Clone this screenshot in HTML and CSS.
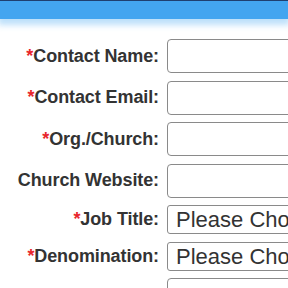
FILE: index.html
```html
<!DOCTYPE html>
<html>
<head>
<meta charset="utf-8">
<link rel="stylesheet" href="styles.css">
</head>
<body>
<div class="topbar"></div>
<form class="form">
  <label class="lbl"><span class="req">*</span>Contact Name:</label>
  <input class="txt" type="text">
  <label class="lbl"><span class="req">*</span>Contact Email:</label>
  <input class="txt" type="text">
  <label class="lbl"><span class="req">*</span>Org./Church:</label>
  <input class="txt" type="text">
  <label class="lbl">Church Website:</label>
  <input class="txt" type="text">
  <label class="lbl"><span class="req">*</span>Job Title:</label>
  <div class="sel">Please Choose</div>
  <label class="lbl"><span class="req">*</span>Denomination:</label>
  <div class="sel">Please Choose</div>
  <label class="lbl"><span class="req">*</span>City:</label>
  <input class="txt" type="text">
</form>
</body>
</html>
```
FILE: styles.css
```css
html, body {
  margin: 0;
  padding: 0;
  background: #fff;
  overflow: hidden;
}
.topbar {
  height: 18px;
  border-top: 1px solid #1f3f70;
  background: #43a5f0;
  box-shadow: 0 4px 6px 2px rgba(67,165,240,0.35);
}
.form {
  margin-top: 20px;
  display: grid;
  grid-template-columns: 159px 200px;
  column-gap: 8px;
  row-gap: 7.5px;
  align-items: center;
  font-family: "Liberation Sans", Arial, sans-serif;
}
.lbl {
  text-align: right;
  font-weight: bold;
  font-size: 18px;
  letter-spacing: -0.1px;
  color: #333;
}
.req {
  color: #e8262b;
  font-weight: bold;
}
.txt {
  box-sizing: border-box;
  height: 34px;
  width: 200px;
  margin: 0;
  border: 1px solid #8a8a8a;
  border-radius: 4px;
  background: #fff;
}
.sel {
  box-sizing: border-box;
  height: 29px;
  width: 200px;
  border: 1px solid #8a8a8a;
  border-radius: 3px;
  padding-left: 8px;
  font-size: 22px;
  line-height: 27px;
  color: #333;
  white-space: nowrap;
  overflow: hidden;
}
```
